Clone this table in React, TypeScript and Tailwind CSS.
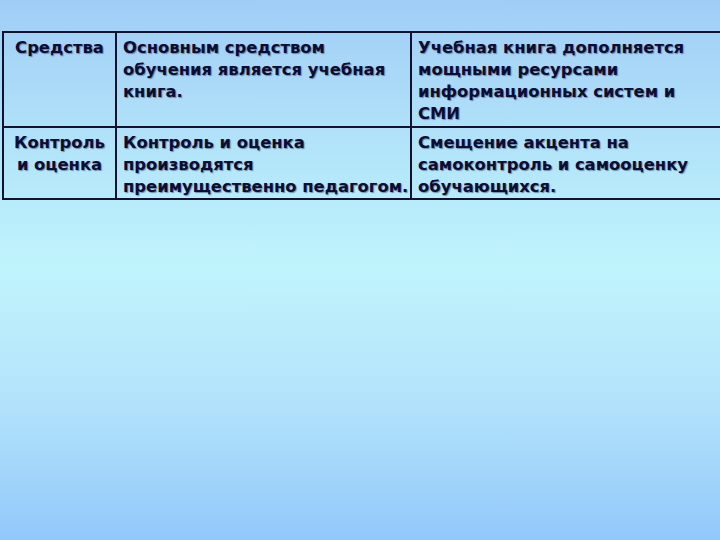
export default function App() {
  const cell =
    "border-2 border-[#12122e] align-top pl-[6px] pt-[4px] pb-0 text-[16.4px] leading-[22px] font-bold text-[#0c0c34] [text-shadow:1px_1px_1px_rgba(60,80,110,0.6)]";

  return (
    <div
      className="w-[720px] h-[540px] overflow-hidden bg-[linear-gradient(to_bottom,#a0cdf6_0%,#b4e6fa_30%,#c0f4fc_50%,#b2e2fb_75%,#92c8fa_100%)] pt-[31px] pl-[2px]"
      style={{ fontFamily: '"DejaVu Sans", Verdana, sans-serif' }}
    >
      <table className="border-collapse w-[724px] table-fixed">
        <colgroup>
          <col className="w-[113px]" />
          <col className="w-[295px]" />
          <col />
        </colgroup>
        <tbody>
          <tr className="h-[95px]">
            <td className={cell + " text-center !px-0"}>Средства</td>
            <td className={cell + " pr-0"}>
              Основным средством обучения является учебная книга.
            </td>
            <td className={cell + " pr-[14px]"}>
              Учебная книга дополняется мощными ресурсами информационных систем и СМИ
            </td>
          </tr>
          <tr className="h-[71px]">
            <td className={cell + " text-center !px-0"}>
              Контроль
              <br />и оценка
            </td>
            <td className={cell + " pr-0"}>
              Контроль и оценка производятся преимущественно педагогом.
            </td>
            <td className={cell + " pr-[14px]"}>
              Смещение акцента на самоконтроль и самооценку обучающихся.
            </td>
          </tr>
        </tbody>
      </table>
    </div>
  );
}
